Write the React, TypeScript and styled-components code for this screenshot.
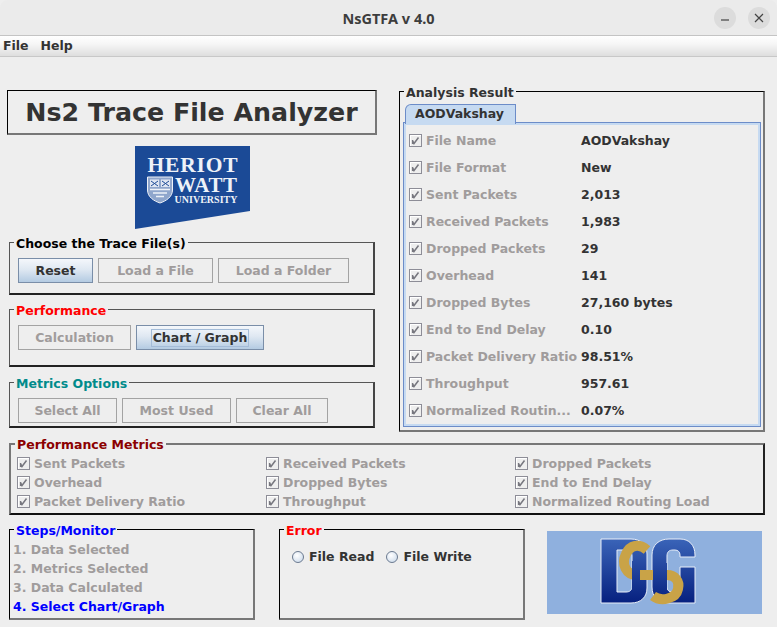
import React from "react";
import styled, { createGlobalStyle } from "styled-components";

const GlobalStyle = createGlobalStyle`
  html, body {
    margin: 0;
    padding: 0;
    background: #eeeeee;
  }
`;

const Window = styled.div`
  width: 777px;
  height: 627px;
  overflow: hidden;
  display: flex;
  flex-direction: column;
  background: #eeeeee;
  color: #333333;
  font-family: "DejaVu Sans", sans-serif;
  font-size: 12.5px;
  font-weight: 700;
`;

const TitleBar = styled.div`
  height: 36px;
  flex: none;
  box-sizing: border-box;
  display: grid;
  grid-template-columns: 1fr auto 1fr;
  align-items: center;
  background: #ebebeb;
  border-bottom: 1px solid #c4c4c4;
  border-radius: 8px 8px 0 0;
`;

const WindowTitle = styled.div`
  grid-column: 2;
  font-family: "Noto Sans", sans-serif;
  font-size: 14.5px;
  font-weight: 700;
  color: #3d3d3d;
`;

const WindowControls = styled.div`
  grid-column: 3;
  justify-self: end;
  display: flex;
  gap: 12px;
  padding-right: 7px;
`;

const RoundButton = styled.div`
  width: 22px;
  height: 22px;
  border-radius: 50%;
  background: #dcdcdc;
  display: flex;
  align-items: center;
  justify-content: center;
`;

const MenuBar = styled.div`
  height: 21px;
  flex: none;
  box-sizing: border-box;
  display: flex;
  align-items: center;
  gap: 12px;
  padding: 0 3px 2px;
  background: linear-gradient(#ffffff, #f6f6f6 40%, #dedede);
  border-bottom: 1px solid #c8c8c8;
`;

const MenuItem = styled.span`
  color: #333333;
`;

const Body = styled.div`
  padding: 27px 12px 0 7px;
  display: flex;
  flex-direction: column;
`;

const TopRow = styled.div`
  display: flex;
  height: 348px;
  gap: 22px;
`;

const LeftColumn = styled.div`
  width: 370px;
  padding-top: 6px;
  display: flex;
  flex-direction: column;
`;

const TitleBox = styled.div`
  height: 45px;
  box-sizing: border-box;
  display: flex;
  align-items: center;
  justify-content: center;
  border-style: solid;
  border-width: 1px 2px 2px 1px;
  border-color: #000000 #777777 #777777 #000000;
  font-size: 25.3px;
  color: #333333;
`;

const LogoSlot = styled.div`
  height: 83px;
  margin-top: 11px;
  padding-left: 128px;
  svg {
    display: block;
  }
`;

type Bevel = "raised" | "lowered" | "flat";

const Group = styled.fieldset<{ $bevel: Bevel; $w: number; $h: number; $mt?: number; $ml?: number }>`
  margin: ${(p) => p.$mt ?? 0}px 0 0 ${(p) => p.$ml ?? 0}px;
  padding: 0;
  min-width: 0;
  box-sizing: border-box;
  width: ${(p) => p.$w}px;
  height: ${(p) => p.$h}px;
  border-style: solid;
  ${(p) =>
    p.$bevel === "raised"
      ? `border-width: 1px 2px 2px 1px; border-color: #555555 #444444 #222222 #555555;`
      : p.$bevel === "lowered"
      ? `border-width: 2px; border-color: #777777 #222222 #111111 #777777;`
      : `border-width: 1px 2px 2px 1px; border-color: #000000 #777777 #777777 #000000;`}
`;

const GroupTitle = styled.legend<{ $color: string }>`
  margin-left: 4px;
  padding: 0 2px;
  line-height: 14px;
  position: relative;
  top: 2px;
  color: ${(p) => p.$color};
`;

const MetricsTitle = styled(GroupTitle)`
  top: 1px;
`;

const ButtonRow = styled.div`
  display: flex;
  gap: 5px;
  padding: 9px 0 0 8px;
`;

const JavaButton = styled.div<{ $w: number; $active?: boolean }>`
  width: ${(p) => p.$w}px;
  height: 25px;
  box-sizing: border-box;
  display: flex;
  align-items: center;
  justify-content: center;
  color: ${(p) => (p.$active ? "#333333" : "#a09c9c")};
  border: 1px solid ${(p) => (p.$active ? "#7a8ea8" : "#a3a3a3")};
  background: ${(p) => (p.$active ? "linear-gradient(#f4f7fb, #dfe8f2 45%, #b4cbe2)" : "transparent")};
`;

const FocusRing = styled.span`
  border: 1px solid #a4bcd8;
  padding: 0 1px;
  line-height: 16px;
`;

const TabBar = styled.div`
  margin: 6px 0 -2px 5px;
  display: flex;
  position: relative;
  z-index: 1;
`;

const Tab = styled.div`
  width: 111px;
  height: 20px;
  box-sizing: border-box;
  padding-left: 9px;
  line-height: 18px;
  background: #c6daf1;
  border: 1px solid #6c8cc8;
  border-bottom: none;
  border-top-left-radius: 6px;
  color: #333333;
`;

const TabPane = styled.div`
  margin-left: 3px;
  width: 358px;
  height: 305px;
  box-sizing: border-box;
  border: 1px solid #6c8cc8;
  outline: 2px solid #c6daf1;
  outline-offset: -3px;
  padding: 4px 0 0 5px;
`;

const ResultRow = styled.div`
  display: grid;
  grid-template-columns: 172px 1fr;
  height: 27px;
  align-items: center;
`;

const Check = styled.span`
  flex: none;
  width: 13px;
  height: 13px;
  box-sizing: border-box;
  display: inline-flex;
  align-items: center;
  justify-content: center;
  border: 1px solid #8d8d97;
  background: #eeeeee;
  box-shadow: inset 1px 1px 0 #ffffff;
`;

const CheckLine = styled.label`
  display: flex;
  align-items: center;
  gap: 4px;
  color: #a09c9c;
  white-space: nowrap;
`;

const Value = styled.span`
  color: #333333;
`;

const MetricsGrid = styled.div`
  display: grid;
  grid-template-columns: repeat(3, 249px);
  grid-auto-rows: 19px;
  align-items: center;
  padding: 3px 0 0 6px;
`;

const BottomRow = styled.div`
  display: flex;
  margin-top: 7px;
  margin-left: 2px;
`;

const StepList = styled.div`
  padding: 4px 0 0 3px;
`;

const Step = styled.div<{ $current?: boolean }>`
  height: 19px;
  line-height: 19px;
  color: ${(p) => (p.$current ? "#0000ff" : "#a09c9c")};
`;

const RadioRow = styled.div`
  display: flex;
  align-items: center;
  padding: 13px 0 0 12px;
`;

const RadioLine = styled.label`
  display: flex;
  align-items: center;
  gap: 5px;
  margin-right: 12px;
  color: #333333;
`;

const Radio = styled.span`
  width: 12px;
  height: 12px;
  border-radius: 50%;
  box-sizing: border-box;
  border: 1px solid #6b7a90;
  background: radial-gradient(circle at 40% 35%, #ffffff, #c6d6e8);
`;

const BrandSlot = styled.div`
  margin-left: 22px;
  margin-top: 9px;
  svg {
    display: block;
  }
`;

const Tick = () => (
  <svg width="9" height="9" viewBox="0 0 9 9">
    <path d="M1.5 4.5 L3 7.5 L7.5 1.5" fill="none" stroke="#77777f" strokeWidth="1.5" />
    <path d="M1.5 4 L1.5 7.5 L3 7.5" fill="none" stroke="#77777f" strokeWidth="1.2" />
  </svg>
);

const CheckItem = ({ label }: { label: string }) => (
  <CheckLine>
    <Check>
      <Tick />
    </Check>
    {label}
  </CheckLine>
);

const HeriotWattLogo = () => (
  <svg width="115" height="83" viewBox="0 0 115 83">
    <polygon points="0,0 115,0 115,65 0,83" fill="#1b4a96" />
    <g fill="#eef2f8" fontFamily="'Liberation Serif', serif">
      <text x="12.5" y="25.5" fontSize="21.5" textLength="90" lengthAdjust="spacing">
        HERIOT
      </text>
      <text x="40" y="46" fontSize="21" textLength="62" lengthAdjust="spacing">
        WATT
      </text>
      <text x="39.5" y="56.5" fontSize="10" textLength="63" lengthAdjust="spacing">
        UNIVERSITY
      </text>
    </g>
    <path
      d="M12.5 31 H37.5 V44 C37.5 51 31 55 25 57 C19 55 12.5 51 12.5 44 Z"
      fill="#8fa6cc"
      stroke="#eef2f8"
      strokeWidth="1"
    />
    <path d="M15 33.5 H24 V41 H15 Z M26 33.5 H35 V41 H26 Z" fill="#dfe6f2" />
    <path d="M16 35 L23 40 M23 35 L16 40 M27 35 L34 40 M34 35 L27 40" stroke="#1b4a96" strokeWidth="1" />
    <path d="M15 43.5 H35 M18 47 L32 47 M21 50.5 L29 50.5" stroke="#eef2f8" strokeWidth="1.6" />
  </svg>
);

const DsgLogo = () => (
  <svg width="215" height="83" viewBox="0 0 215 83">
    <defs>
      <linearGradient id="dsgBlue" gradientUnits="userSpaceOnUse" x1="0" y1="8" x2="0" y2="72">
        <stop offset="0" stopColor="#3a64b8" />
        <stop offset="1" stopColor="#06207f" />
      </linearGradient>
    </defs>
    <rect width="215" height="83" fill="#8fb0de" />
    <path
      fillRule="evenodd"
      d="M54 8 H84 C94 8 100 14 100 23 V57 C100 66 94 72 84 72 H54 Z M70 19 V61 H79 C83 61 85 59 85 55 V25 C85 21 83 19 79 19 Z"
      fill="url(#dsgBlue)"
      stroke="#e8eef8"
      strokeWidth="1"
    />
    <path
      d="M105 24 C105 14 112 8 122 8 H133 C142 8 148 14 148 24 V26 H133 V24 C133 21 131 19 128 19 H126 C122 19 120 21 120 25 V56 C120 59 122 61 125 61 H133 V36 H148 V72 H121 C111 72 105 66 105 56 Z"
      fill="url(#dsgBlue)"
      stroke="#e8eef8"
      strokeWidth="1"
    />
    <path
      d="M100 19 C92 12 83 14 79 23 C74 33 79 44 90 44 H120 C128 44 133 50 131 58 C129 68 114 71 106 65"
      fill="none"
      stroke="#c9a347"
      strokeWidth="10"
    />
    <rect x="85" y="30" width="8" height="32" fill="url(#dsgBlue)" />
    <rect x="106" y="32" width="14" height="26" fill="url(#dsgBlue)" />
  </svg>
);

const results: [string, string][] = [
  ["File Name", "AODVakshay"],
  ["File Format", "New"],
  ["Sent Packets", "2,013"],
  ["Received Packets", "1,983"],
  ["Dropped Packets", "29"],
  ["Overhead", "141"],
  ["Dropped Bytes", "27,160 bytes"],
  ["End to End Delay", "0.10"],
  ["Packet Delivery Ratio", "98.51%"],
  ["Throughput", "957.61"],
  ["Normalized Routin...", "0.07%"],
];

const metrics = [
  "Sent Packets",
  "Received Packets",
  "Dropped Packets",
  "Overhead",
  "Dropped Bytes",
  "End to End Delay",
  "Packet Delivery Ratio",
  "Throughput",
  "Normalized Routing Load",
];

const App: React.FC = () => {
  return (
    <Window>
      <GlobalStyle />
      <TitleBar>
        <WindowTitle>NsGTFA v 4.0</WindowTitle>
        <WindowControls>
          <RoundButton>
            <svg width="10" height="10" viewBox="0 0 10 10">
              <path d="M1 7 H9" stroke="#444444" strokeWidth="1.2" />
            </svg>
          </RoundButton>
          <RoundButton>
            <svg width="10" height="10" viewBox="0 0 10 10">
              <path d="M1 1 L9 9 M9 1 L1 9" stroke="#444444" strokeWidth="1.2" />
            </svg>
          </RoundButton>
        </WindowControls>
      </TitleBar>
      <MenuBar>
        <MenuItem>File</MenuItem>
        <MenuItem>Help</MenuItem>
      </MenuBar>
      <Body>
        <TopRow>
          <LeftColumn>
            <TitleBox>Ns2 Trace File Analyzer</TitleBox>
            <LogoSlot>
              <HeriotWattLogo />
            </LogoSlot>
            <Group $bevel="raised" $w={366} $h={60} $mt={6} $ml={2}>
              <GroupTitle $color="#000000">Choose the Trace File(s)</GroupTitle>
              <ButtonRow>
                <JavaButton $w={75} $active>
                  Reset
                </JavaButton>
                <JavaButton $w={115}>Load a File</JavaButton>
                <JavaButton $w={131}>Load a Folder</JavaButton>
              </ButtonRow>
            </Group>
            <Group $bevel="raised" $w={366} $h={65} $mt={7} $ml={2}>
              <GroupTitle $color="#ff0000">Performance</GroupTitle>
              <ButtonRow>
                <JavaButton $w={113}>Calculation</JavaButton>
                <JavaButton $w={128} $active>
                  <FocusRing>Chart / Graph</FocusRing>
                </JavaButton>
              </ButtonRow>
            </Group>
            <Group $bevel="raised" $w={366} $h={53} $mt={8} $ml={2}>
              <GroupTitle $color="#008b8b">Metrics Options</GroupTitle>
              <ButtonRow>
                <JavaButton $w={99}>Select All</JavaButton>
                <JavaButton $w={109}>Most Used</JavaButton>
                <JavaButton $w={92}>Clear All</JavaButton>
              </ButtonRow>
            </Group>
          </LeftColumn>
          <Group $bevel="flat" $w={366} $h={348}>
            <GroupTitle $color="#333333">Analysis Result</GroupTitle>
            <TabBar>
              <Tab>AODVakshay</Tab>
            </TabBar>
            <TabPane>
              {results.map(([label, value]) => (
                <ResultRow key={label}>
                  <CheckItem label={label} />
                  <Value>{value}</Value>
                </ResultRow>
              ))}
            </TabPane>
          </Group>
        </TopRow>
        <Group $bevel="lowered" $w={756} $h={78} $mt={5} $ml={2}>
          <MetricsTitle $color="#8b0000">Performance Metrics</MetricsTitle>
          <MetricsGrid>
            {metrics.map((m) => (
              <CheckItem key={m} label={m} />
            ))}
          </MetricsGrid>
        </Group>
        <BottomRow>
          <Group $bevel="flat" $w={246} $h={98}>
            <GroupTitle $color="#0000ff">Steps/Monitor</GroupTitle>
            <StepList>
              <Step>1. Data Selected</Step>
              <Step>2. Metrics Selected</Step>
              <Step>3. Data Calculated</Step>
              <Step $current>4. Select Chart/Graph</Step>
            </StepList>
          </Group>
          <Group $bevel="flat" $w={246} $h={98} $ml={24}>
            <GroupTitle $color="#ff0000">Error</GroupTitle>
            <RadioRow>
              <RadioLine>
                <Radio />
                File Read
              </RadioLine>
              <RadioLine>
                <Radio />
                File Write
              </RadioLine>
            </RadioRow>
          </Group>
          <BrandSlot>
            <DsgLogo />
          </BrandSlot>
        </BottomRow>
      </Body>
    </Window>
  );
};

export default App;
